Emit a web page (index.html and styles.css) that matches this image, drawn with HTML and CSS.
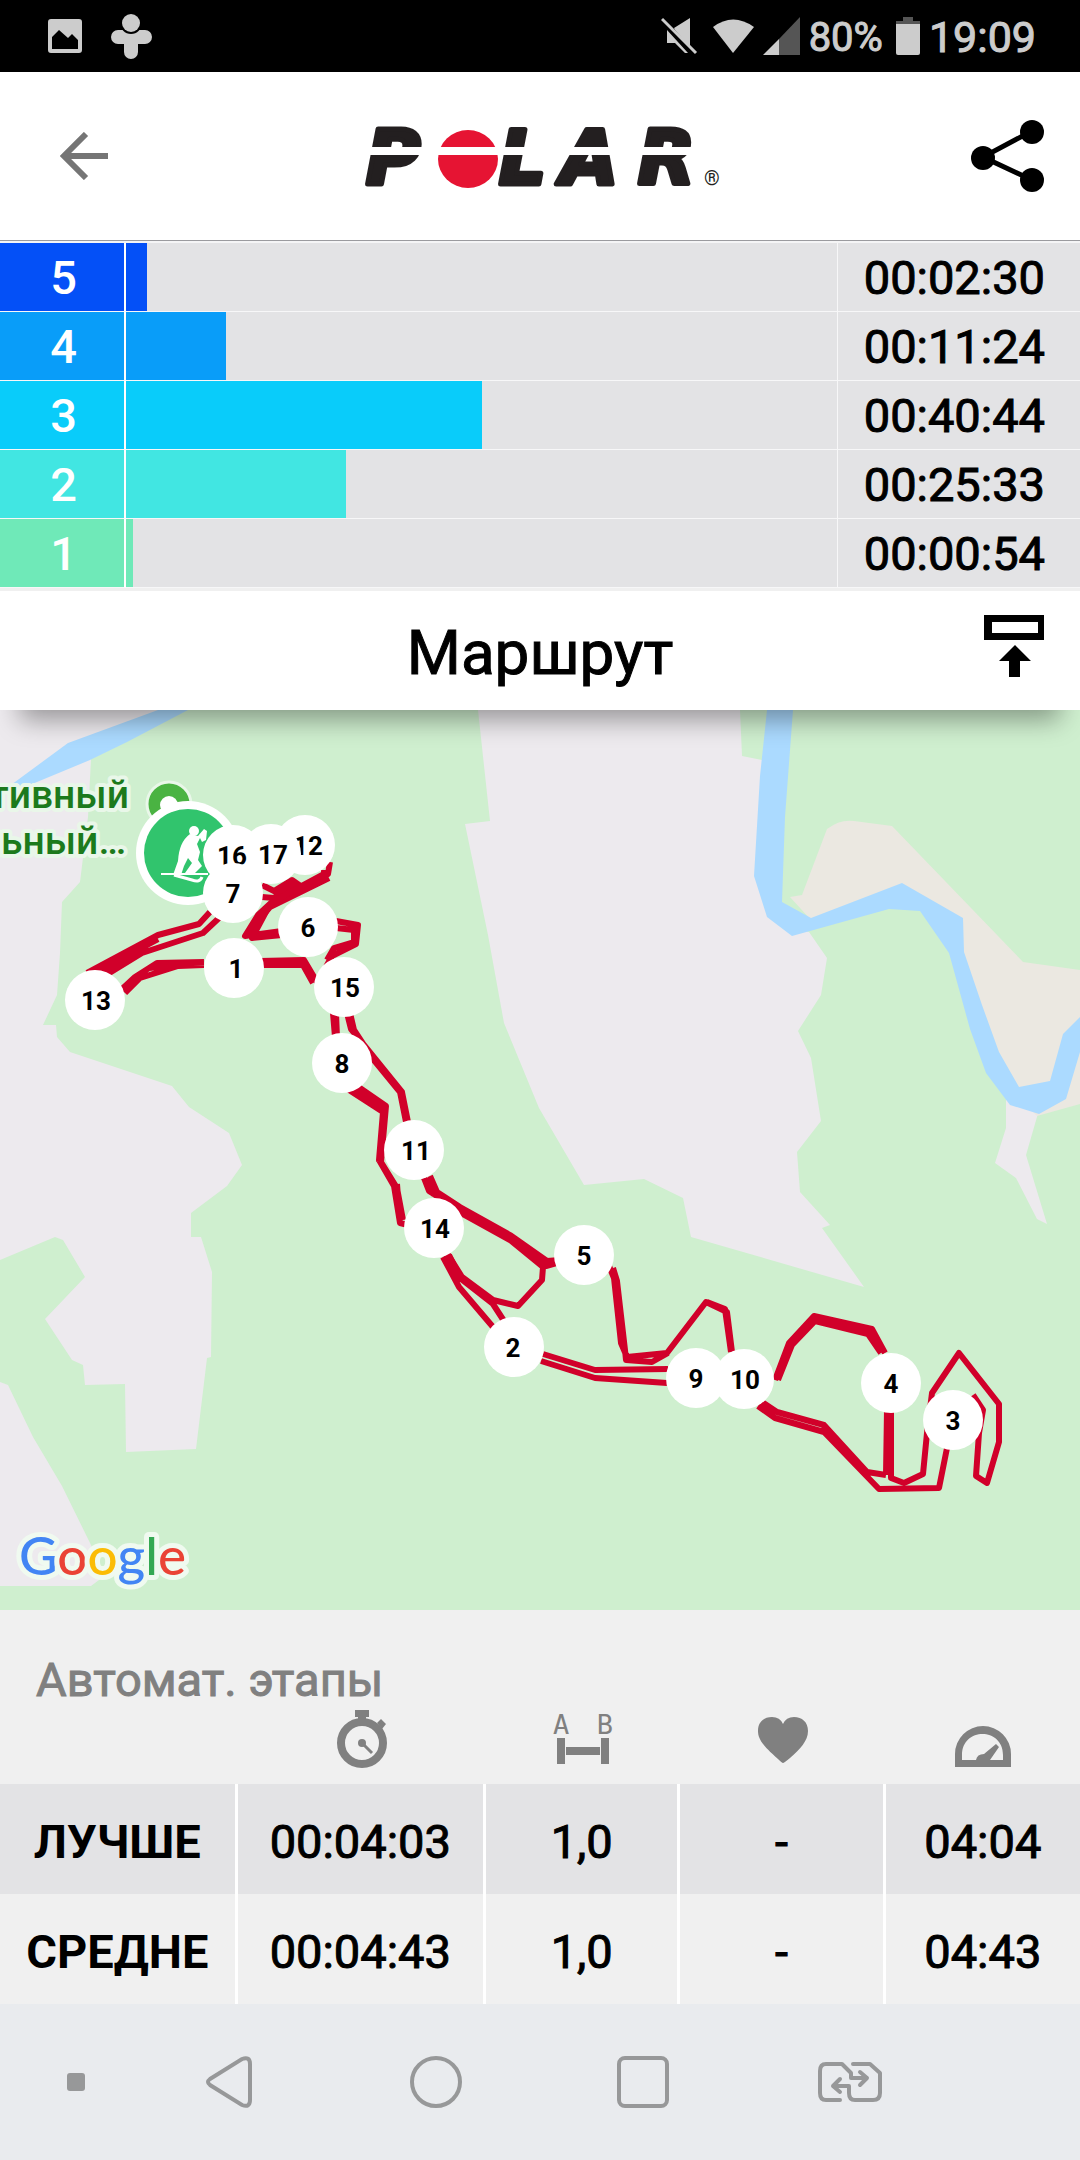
FILE: index.html
```
<!DOCTYPE html>
<html lang="ru">
<head>
    <meta charset="UTF-8">
    <meta name="viewport" content="width=device-width, initial-scale=1.0">
    <title>Polar - Маршрут</title>
    <link rel="stylesheet" href="styles.css">
</head>
<body>
    <div class="status-bar">
        <div class="status-left">
            <svg width="34" height="34" viewBox="0 0 34 34"><path fill="#ccc" fill-rule="evenodd" d="M3 0h28a3 3 0 0 1 3 3v28a3 3 0 0 1-3 3H3a3 3 0 0 1-3-3V3a3 3 0 0 1 3-3zM4 18v12h26V21l-6-6-4 4-9-8z"/></svg>
            <svg width="41" height="46" viewBox="0 0 41 46"><path fill="#ccc" d="M7 17h27a7 7 0 0 1 0 14h-7v8a7 7 0 0 1-14 0v-8H7a7 7 0 0 1 0-14z"/><circle cx="20" cy="10" r="11"/><circle cx="20" cy="10" r="9" fill="#ccc"/></svg>
        </div>
        <div class="status-right">
            <svg width="43" height="38" viewBox="0 0 43 38"><path fill="#ccc" d="M13 11l16-10v29L14 13zM6 13l21 23h-3L14 26H6z"/><path stroke="#ccc" stroke-width="3" d="M1 2l34 34"/></svg>
            <svg width="41" height="34" viewBox="0 0 41 34"><path fill="#ccc" d="M0 8Q20-7 41 8L20 34z"/></svg>
            <svg width="37" height="38" viewBox="0 0 37 38"><path fill="#555" d="M37 0v38H16V22z"/><path fill="#ccc" d="M16 22v16H0z"/></svg>
            <span class="battery-text">80%</span>
            <svg width="28" height="38" viewBox="0 0 28 38"><path fill="#555" d="M11 0h10v4h7v4H4V4h7z"/><path fill="#ccc" d="M4 7h24v29a2 2 0 0 1-2 2H6a2 2 0 0 1-2-2z"/></svg>
            <span class="clock">19:09</span>
        </div>
    </div>

    <header class="header">
        <button class="icon-button back" aria-label="Назад">
            <svg width="48" height="48" viewBox="0 0 48 48" fill="none" stroke="#757575" stroke-width="6"><path d="M26 2L4 24l22 22M4 24h44"/></svg>
        </button>
        <svg class="logo" width="360" height="90" viewBox="0 -16 360 90" role="img" aria-label="Polar">
            <g class="logo-text">
                <text x="6" y="57">P</text>
                <text x="139" y="57">L</text>
                <text x="201" y="57">A</text>
                <text x="278" y="57">R</text>
            </g>
            <ellipse cx="108" cy="32" rx="30" ry="29" fill="#e61433"/>
            <path fill="#fff" d="M0 20h360v8H0z"/>
            <text class="logo-mark" x="344" y="58">®</text>
        </svg>
        <button class="icon-button share" aria-label="Поделиться">
            <svg width="73" height="74" viewBox="0 0 73 74"><path d="M61 12L12 38l49 23" fill="none" stroke="#000" stroke-width="5"/><circle cx="61" cy="13" r="12"/><circle cx="12" cy="39" r="12"/><circle cx="61" cy="61" r="12"/></svg>
        </button>
    </header>

    <table class="zones">
        <tr class="zone-5"><th scope="row">5</th><td class="track"><div class="bar" style="width: 3%"></div></td><td class="time">00:02:30</td></tr>
        <tr class="zone-4"><th scope="row">4</th><td class="track"><div class="bar" style="width: 14%"></div></td><td class="time">00:11:24</td></tr>
        <tr class="zone-3"><th scope="row">3</th><td class="track"><div class="bar" style="width: 50%"></div></td><td class="time">00:40:44</td></tr>
        <tr class="zone-2"><th scope="row">2</th><td class="track"><div class="bar" style="width: 31%"></div></td><td class="time">00:25:33</td></tr>
        <tr class="zone-1"><th scope="row">1</th><td class="track"><div class="bar" style="width: 1%"></div></td><td class="time">00:00:54</td></tr>
    </table>

    <div class="route-title">
        <h1>Маршрут</h1>
        <button class="icon-button" aria-label="Свернуть">
            <svg width="60" height="62" viewBox="0 0 60 62"><path fill-rule="evenodd" d="M0 0h60v25H0zM8 7v11h46V7z"/><path d="M31 30l16 16H36v16H25V46H15z"/></svg>
        </button>
    </div>

    <div class="map">
        <svg viewBox="0 0 1080 900">
            <rect width="1080" height="900" fill="#cfefcf"/>
            <!-- land -->
            <g fill="#edeaee">
                <path d="M0 0H187L91 49 88 107 80 172 62 192 60 243 57 285 43 315H56L57 327 70 342 172 376 189 397 229 423 242 455 227 476 191 503V527H201L212 562 211 647 207 648 196 739 126 742 125 674 85 675 83 655 72 650 45 609 85 567 63 530 55 527 0 550z"/>
                <path d="M0 672L8 675 33 727 62 776 91 835 103 867 91 876H0z"/>
                <path d="M478 0H740L742 46 762 50 780 215 809 222 827 248 821 285 798 321 811 348 821 411 797 442 800 482 830 515 822 518 864 577 691 527 683 488 644 469 584 475 539 398 504 313 488 225 465 114 490 111z"/>
                <path d="M1006 390V418L995 453 1016 468 1037 509 1047 514 1026 445 1039 400z"/>
            </g>
            <path fill="#ebe8e1" d="M790 187L802 185 827 119Q840 109 854 111L892 116 1023 252 1080 260V394L1037 406 1010 380 960 240 902 180 811 210z"/>
            <!-- water -->
            <g fill="#abdaff">
                <path d="M158 0L68 33 15 72 0 82V87L37 72 90 50 127 32 188 0z"/>
                <path d="M767 0L760 66 754 166 767 207 792 226 889 199 920 201 949 243 970 319 986 363 1010 395 1039 404 1066 389 1080 342V307L1063 324 1050 371 1019 377 999 342 982 295 964 242 963 208 902 173 811 208 782 192 785 107 793 0z"/>
            </g>
            <!-- route -->
            <g fill="none" stroke="#d1002a" stroke-width="6" stroke-linejoin="round">
                <path d="M210 202L199 214 158 225 87 263M219 208L203 223 142 243 98 270M158 229L128 245 92 268"/>
                <path d="M121 280L135 267 157 253 204 252M125 283L140 268 178 256 204 255M150 258L180 253"/>
                <path d="M260 251L304 250 317 272M260 255L303 255 313 273"/>
                <path d="M262 175L274 181 292 170 302 177 328 164 330 152M262 187L274 188 290 176 300 179 324 166 324 160M329 168L270 197 258 211 249 228"/>
                <path d="M326 163L272 192 258 205 245 226 282 221M268 198L252 228 282 225"/>
                <path d="M336 211L358 215 356 234 332 246 326 257M336 218L354 220 354 232 334 238 327 250"/>
                <path d="M333 303L335 327M336 303L337 327"/>
                <path d="M347 303L351 319 368 340 402 382 408 412M350 303L354 320 373 349 400 382 406 412"/>
                <path d="M357 376L386 396 381 452 397 478 403 510M349 380L383 402 379 450 394 476 400 513 408 515M353 379L384 399 379 452M397 474L400 512"/>
                <path d="M430 466L437 482 460 497 510 525 547 551 560 550M424 468L429 481 440 488 463 504 510 530 543 557 542 570 518 596 493 590 462 567 447 543M514 529L546 556 560 552M427 468L434 485"/>
                <path d="M443 547L459 577 493 617M449 545L461 569 493 594 504 611M446 545L460 572"/>
                <path d="M543 644L595 660 668 659M541 651L595 668 667 673"/>
                <path d="M609 556L614 568 621 633 627 647 667 643 706 592 727 602 732 642M613 558L617 571 625 640 626 650 652 652 668 643M707 592L725 599 731 642"/>
                <path d="M775 670L789 633 814 606 872 619 885 643M778 670L792 635 815 611 868 624 881 643M815 608L871 621"/>
                <path d="M762 692L777 702 824 715 867 762 886 765M758 696L775 708 824 722 879 779 939 778 947 738M822 717L867 764"/>
                <path d="M887 700L886 765M889 700V765M891 700V768L904 773 923 764 927 723 932 683 959 643 999 694V732L987 773 976 766 979 723 983 700 973 685"/>
            </g>
            <!-- place label -->
            <g class="place">
                <text x="129" y="98">тивный</text>
                <text x="126" y="144">льный…</text>
            </g>
            <circle cx="169" cy="94" r="22" fill="#4ab342" stroke="#e9f7e9" stroke-width="3"/>
            <circle cx="169" cy="95" r="9" fill="#fff"/>
            <circle cx="188" cy="143" r="52" fill="#fff"/>
            <circle cx="188" cy="143" r="44" fill="#31c46d"/>
            <g fill="#fff">
                <circle cx="194" cy="121" r="5"/>
                <path d="M190 124L198 126 204 119 207 121 206 130 202 132 200 128 197 134 200 142 198 150 202 156 194 164 185 163 192 153 188 148 184 156 181 165 173 165 178 151Q179 132 190 124z"/>
            </g>
            <g fill="none" stroke="#fff" stroke-width="2"><path d="M161 164H208"/><path d="M174 165L192 170Q200 173 202 167" stroke-width="3"/></g>
            <g class="lap">
                <circle cx="305" cy="135" r="30"/><text x="308" y="145">12</text>
                <circle cx="271" cy="144" r="30"/><circle cx="233" cy="145" r="30"/>
                <text x="273" y="154">17</text><text x="232" y="155">16</text>
                <circle cx="233" cy="183" r="30"/><text x="233" y="193">7</text>
                <circle cx="308" cy="217" r="30"/><text x="308" y="227">6</text>
                <circle cx="234" cy="258" r="30"/><text x="236" y="268">1</text>
                <circle cx="95" cy="290" r="30"/><text x="96" y="300">13</text>
                <circle cx="342" cy="353" r="30"/><text x="342" y="363">8</text>
                <circle cx="344" cy="277" r="30"/><text x="345" y="287">15</text>
                <circle cx="414" cy="440" r="30"/><text x="416" y="450">11</text>
                <circle cx="434" cy="518" r="30"/><text x="435" y="528">14</text>
                <circle cx="584" cy="545" r="30"/><text x="584" y="555">5</text>
                <circle cx="514" cy="637" r="30"/><text x="513" y="647">2</text>
                <circle cx="696" cy="668" r="30"/><text x="696" y="678">9</text>
                <circle cx="744" cy="669" r="30"/><text x="745" y="679">10</text>
                <circle cx="891" cy="673" r="30"/><text x="891" y="683">4</text>
                <circle cx="953" cy="710" r="30"/><text x="953" y="720">3</text>
            </g>
            <text class="google" x="19" y="865"><tspan class="g-blue">G</tspan><tspan class="g-red">o</tspan><tspan class="g-yellow">o</tspan><tspan class="g-blue">g</tspan><tspan class="g-green">l</tspan><tspan class="g-red">e</tspan></text>
        </svg>
    </div>

    <section class="laps">
        <h2>Автомат. этапы</h2>
        <table class="laps-table">
            <thead>
                <tr>
                    <td></td>
                    <th scope="col" aria-label="Время">
                        <svg width="52" height="60" viewBox="0 0 52 60"><circle cx="26" cy="34" r="21" fill="none" stroke="#808080" stroke-width="8"/><path d="M19 1h14v7h-3v4h-8V8h-3zM41 14l4-4 5 5-4 5z"/><circle cx="26" cy="34" r="4"/><path d="M26 34l10 10" stroke="#808080" stroke-width="3"/></svg>
                    </th>
                    <th scope="col" aria-label="Дистанция">
                        <svg width="60" height="60" viewBox="0 0 60 60"><text x="8" y="25">A</text><text x="52" y="25">B</text><path d="M4 29h8v26H4zM13 38h34v8H13zM48 29h8v26h-8z"/></svg>
                    </th>
                    <th scope="col" aria-label="Пульс">
                        <svg width="50" height="60" viewBox="0 0 50 60"><path d="M25 54Q24 54 20 50C5 37 0 30 0 22 0 12 7 8 14 8q8 0 11 7Q28 8 36 8c8 0 14 5 14 14 0 10-8 18-18 27Q26 54 25 54z"/></svg>
                    </th>
                    <th scope="col" aria-label="Темп">
                        <svg width="56" height="60" viewBox="0 0 56 60"><path fill-rule="evenodd" d="M0 58V45a28 28 0 0 1 56 0v13zM7 51h14q1-6 8-6l12-10 3 3-9 13h13v-5C48 18 7 18 7 46z"/></svg>
                    </th>
                </tr>
            </thead>
            <tbody>
                <tr class="best"><th scope="row">ЛУЧШЕ</th><td>00:04:03</td><td>1,0</td><td>-</td><td>04:04</td></tr>
                <tr><th scope="row">СРЕДНЕ</th><td>00:04:43</td><td>1,0</td><td>-</td><td>04:43</td></tr>
            </tbody>
        </table>
    </section>

    <nav class="nav-bar">
        <button class="icon-button dot" aria-label="Скрыть панель"><svg width="18" height="18" viewBox="0 0 18 18"><rect width="18" height="18" rx="3" fill="#979899"/></svg></button>
        <button class="icon-button" aria-label="Назад"><svg width="46" height="52" viewBox="0 0 46 52"><path d="M4 23L36 3Q44 0 44 8V44Q44 52 36 49L4 29Q0 26 4 23z"/></svg></button>
        <button class="icon-button" aria-label="Домой"><svg width="52" height="52" viewBox="0 0 52 52"><circle cx="26" cy="26" r="24"/></svg></button>
        <button class="icon-button" aria-label="Недавние"><svg width="52" height="52" viewBox="0 0 52 52"><rect x="2" y="2" width="48" height="48" rx="6"/></svg></button>
        <button class="icon-button" aria-label="SIM-карты"><svg width="64" height="40" viewBox="0 0 64 40" stroke-linecap="round" stroke-linejoin="round"><path d="M22 38H8Q2 38 2 31V9Q2 2 8 2H24L33 11V16H49M42 10L49 16 42 23M35 2H52L62 11V31Q62 38 55 38H37Q31 38 31 31V24H15M22 17L15 24 22 30"/></svg></button>
    </nav>
</body>
</html>
```
FILE: styles.css
```
* {
    box-sizing: border-box;
}
body {
    margin: 0;
    background: #fff;
    color: #000;
    font-family: Roboto, Arial, sans-serif;
}
svg {
    display: block;
}
.icon-button {
    display: flex;
    align-items: center;
    justify-content: center;
    padding: 0;
    border: none;
    background: none;
    cursor: pointer;
}
table {
    width: 100%;
    border-spacing: 0;
    table-layout: fixed;
}
th, td {
    padding: 0;
}

/* status bar */
.status-bar {
    display: flex;
    justify-content: space-between;
    align-items: center;
    height: 72px;
    padding: 0 44px 0 48px;
    background: #000;
    color: #ccc;
}
.status-left, .status-right {
    display: flex;
    align-items: center;
}
.status-left {
    gap: 29px;
}
.status-right {
    gap: 9px;
}
.battery-text, .clock {
    padding-top: 2px;
    -webkit-text-stroke: 1px #ccc;
}
.battery-text {
    font-size: 40px;
}
.clock {
    font-size: 43px;
}

/* header */
.header {
    display: grid;
    grid-template-columns: 1fr auto 1fr;
    align-items: center;
    height: 169px;
    padding: 0 36px 0 60px;
    border-bottom: 1px solid #9b9b9f;
}
.back {
    justify-self: start;
}
.share {
    justify-self: end;
}
.logo {
    margin-right: 24px;
    overflow: visible;
}
.logo-text {
    font: italic bold 74px "DejaVu Sans", sans-serif;
    fill: #231f20;
    stroke: #231f20;
    stroke-width: 5px;
    stroke-linejoin: round;
}
.logo-mark {
    font-size: 20px;
    fill: #231f20;
}

/* heart rate zones */
.zones {
    border-top: 2px solid #f5f5f6;
    border-bottom: 3px solid #f0f0f0;
    background: #e3e3e5;
    font-size: 47px;
}
.zones th, .zones td {
    height: 69px;
    border-bottom: 1px solid #f7f7f8;
}
.zones th {
    width: 126px;
    padding-left: 3px;
    border-right: 2px solid #fff;
    color: #fff;
    font-weight: 500;
}
.zones .track {
    border-right: 1px solid #f7f7f8;
}
.bar {
    height: 68px;
}
.zones .time {
    width: 242px;
    padding-right: 35px;
    text-align: right;
    -webkit-text-stroke: 1px #000;
}
.zone-5 th, .zone-5 .bar {
    background: #0450f7;
}
.zone-4 th, .zone-4 .bar {
    background: #099df9;
}
.zone-3 th, .zone-3 .bar {
    background: #09ccfa;
}
.zone-2 th, .zone-2 .bar {
    background: #41e6e2;
}
.zone-1 th, .zone-1 .bar {
    background: #6fe9b8;
}

/* route */
.route-title {
    position: relative;
    display: grid;
    grid-template-columns: 1fr auto 1fr;
    align-items: center;
    height: 119px;
    padding: 0 36px;
    background: #fff;
    box-shadow: 0 30px 26px -20px rgba(0, 0, 0, 0.36);
}
.route-title h1 {
    grid-column: 2;
    margin: 0;
    padding-top: 4px;
    font-size: 62px;
    font-weight: 400;
    -webkit-text-stroke: 1px #000;
}
.route-title button {
    justify-self: end;
    padding-bottom: 9px;
}
.map svg {
    width: 100%;
    height: auto;
}
.place text {
    font-size: 39px;
    font-weight: 500;
    text-anchor: end;
    fill: #1c7a1c;
    stroke: #e9f7e9;
    stroke-width: 8px;
    stroke-linejoin: round;
    paint-order: stroke;
}
.lap circle {
    fill: #fff;
}
.lap text {
    font-size: 26px;
    font-weight: 700;
    text-anchor: middle;
}
.google {
    font-family: Lato, sans-serif;
    font-size: 53px;
    font-weight: 500;
    stroke: #f0faf0;
    stroke-width: 10px;
    stroke-linejoin: round;
    paint-order: stroke;
}
.g-blue {
    fill: #4285f4;
}
.g-red {
    fill: #ea4335;
}
.g-yellow {
    fill: #fbbc05;
}
.g-green {
    fill: #34a853;
}

/* laps */
.laps {
    padding-top: 42px;
    background: #f0f0f0;
}
.laps h2 {
    margin: 0;
    padding-left: 36px;
    color: #808080;
    font-size: 47px;
    font-weight: 400;
    line-height: 56px;
    -webkit-text-stroke: 1px #808080;
}
.laps-table {
    font-size: 47px;
    text-align: center;
}
.laps-table thead tr {
    height: 76px;
}
.laps-table thead svg {
    margin: 0 auto;
    fill: #808080;
}
.laps-table thead text {
    font-family: "DejaVu Sans Mono", monospace;
    font-size: 27px;
    font-weight: 400;
    text-anchor: middle;
}
.laps-table thead th {
    padding-bottom: 14px;
}
.laps-table tbody tr {
    height: 110px;
}
.laps-table tbody th, .laps-table tbody td {
    padding-top: 4px;
    border-right: 3px solid #fff;
}
.laps-table tbody td {
    -webkit-text-stroke: 1px #000;
}
.laps-table tbody td:last-child {
    border-right: none;
}
.laps-table .best {
    background: #e3e3e5;
}
.laps-table tr > :nth-child(1) {
    width: 22%;
}
.laps-table tr > :nth-child(2) {
    width: 23%;
}
.laps-table tr > :nth-child(3) {
    width: 18%;
}
.laps-table tr > :nth-child(4) {
    width: 19%;
}

/* navigation bar */
.nav-bar {
    display: flex;
    align-items: center;
    height: 156px;
    padding: 0 126px 0 27px;
    background: #e9ebee;
}
.nav-bar button {
    flex: 1;
}
.nav-bar .dot {
    flex: 0 0 98px;
}
.nav-bar svg {
    fill: none;
    stroke: #979899;
    stroke-width: 4px;
}
.nav-bar .dot svg {
    stroke: none;
}
```
